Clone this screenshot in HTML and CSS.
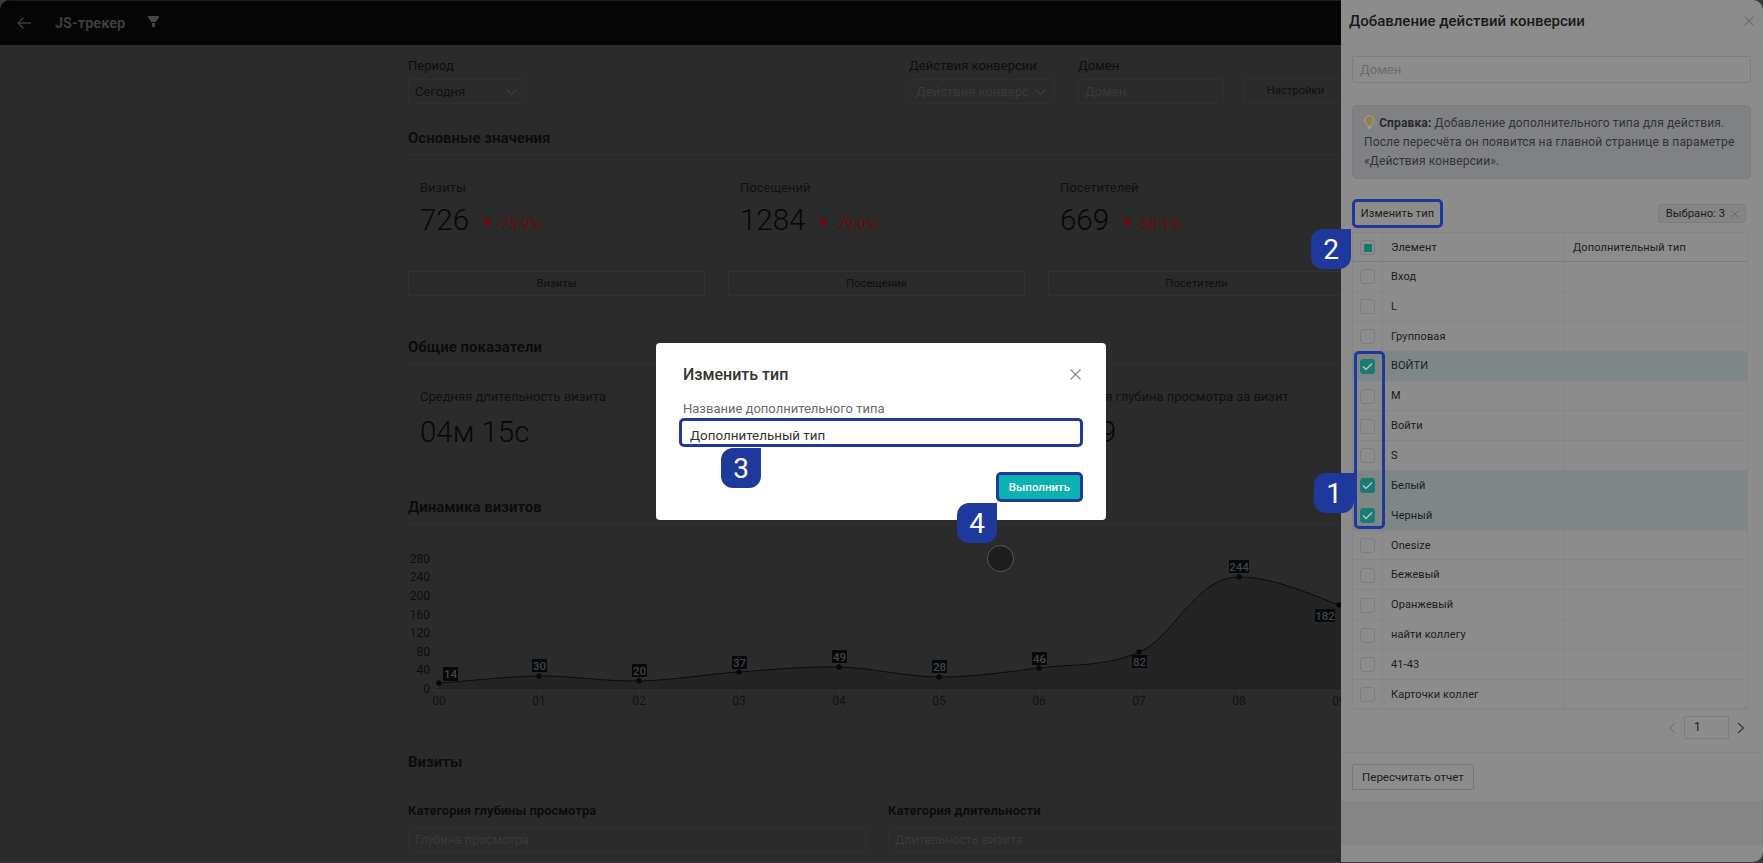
FILE: index.html
```html
<!DOCTYPE html>
<html lang="ru">
<head>
<meta charset="utf-8">
<title>JS-трекер</title>
<link rel="stylesheet" href="styles.css">
</head>
<body>
<div class="app">
  <div class="main">
    <header class="topbar">
      <svg class="back" width="16" height="14" viewBox="0 0 16 14"><path d="M15 7H2M7.500 1.500 2 7l5.500 5.500" fill="none" stroke="#3c3c3c" stroke-width="1.300"/></svg>
      <span class="app-title">JS-трекер</span>
      <svg class="funnel" width="11" height="11" viewBox="0 0 11 11"><path d="M0 0h11v1.500L7.500 6h-4L0 1.500zM4 7h3v4H4z" fill="#454545"/></svg>
    </header>
    <div class="content">
      <div class="filters">
        <div class="field field-period">
          <label class="field-label">Период</label>
          <div class="control"><span class="control-value">Сегодня</span><svg class="chev" width="11" height="8" viewBox="0 0 11 8"><path d="M.5.800 5.500 7 10.500.8" fill="none" stroke="#454545"/></svg></div>
        </div>
        <div class="field field-action">
          <label class="field-label">Действия конверсии</label>
          <div class="control"><span class="control-ph">Действия конверс</span><svg class="chev" width="11" height="8" viewBox="0 0 11 8"><path d="M.5.800 5.500 7 10.500.8" fill="none" stroke="#454545"/></svg></div>
        </div>
        <div class="field field-domain">
          <label class="field-label">Домен</label>
          <div class="control"><span class="control-ph">Домен</span></div>
        </div>
        <button class="ghost-btn settings">Настройки</button>
      </div>

      <h2 class="sec-title first">Основные значения</h2>
      <div class="metrics">
        <div class="metric">
          <div class="metric-label">Визиты</div>
          <div class="metric-value">726<span class="tri"></span><span class="delta">-75.9%</span></div>
        </div>
        <div class="metric">
          <div class="metric-label">Посещений</div>
          <div class="metric-value">1284<span class="tri"></span><span class="delta">-79.0%</span></div>
        </div>
        <div class="metric">
          <div class="metric-label">Посетителей</div>
          <div class="metric-value">669<span class="tri"></span><span class="delta">-68.1%</span></div>
        </div>
      </div>
      <div class="metric-btns">
        <button class="ghost-btn">Визиты</button>
        <button class="ghost-btn">Посещения</button>
        <button class="ghost-btn">Посетители</button>
      </div>

      <h2 class="sec-title second">Общие показатели</h2>
      <div class="metrics metrics-general">
        <div class="metric">
          <div class="metric-label">Средняя длительность визита</div>
          <div class="metric-value">04м 15с</div>
        </div>
        <div class="metric"></div>
        <div class="metric">
          <div class="metric-label">Средняя глубина просмотра за визит</div>
          <div class="metric-value">1.79</div>
        </div>
      </div>

      <h2 class="sec-title third">Динамика визитов</h2>
      <svg class="chart" width="950" height="180" viewBox="408 530 950 180">
        <g class="y-axis">
          <text x="430" y="563">280</text><text x="430" y="581">240</text><text x="430" y="600">200</text><text x="430" y="619">160</text><text x="430" y="637">120</text><text x="430" y="656">80</text><text x="430" y="674">40</text><text x="430" y="693">0</text>
        </g>
        <path class="area" d="M439 683C472 681 506 676.300 539 676C572 675.700 606 681.700 639 681C672 680.300 706 674.300 739 672C772 669.700 806 666.200 839 667C872 667.800 906 676.800 939 677C972 677.200 1006 672.200 1039 668C1072 663.800 1106 667 1139 652C1172 640 1195 577 1239 577C1270 577 1300 590 1339 605L1358 612V690H439Z"/>
        <path class="line" d="M439 683C472 681 506 676.300 539 676C572 675.700 606 681.700 639 681C672 680.300 706 674.300 739 672C772 669.700 806 666.200 839 667C872 667.800 906 676.800 939 677C972 677.200 1006 672.200 1039 668C1072 663.800 1106 667 1139 652C1172 640 1195 577 1239 577C1270 577 1300 590 1339 605L1358 612"/>
        <path class="axis" d="M430 690.500H1358M439.500 690v5M539.500 690v5M639.500 690v5M739.500 690v5M839.500 690v5M939.500 690v5M1039.500 690v5M1139.500 690v5M1239.500 690v5M1339.500 690v5"/>
        <g class="x-axis">
          <text x="439" y="705">00</text><text x="539" y="705">01</text><text x="639" y="705">02</text><text x="739" y="705">03</text><text x="839" y="705">04</text><text x="939" y="705">05</text><text x="1039" y="705">06</text><text x="1139" y="705">07</text><text x="1239" y="705">08</text><text x="1339" y="705">09</text>
        </g>
        <g class="dots">
          <circle cx="439" cy="683" r="2.700"/><circle cx="539" cy="676" r="2.700"/><circle cx="639" cy="681" r="2.700"/><circle cx="739" cy="672" r="2.700"/><circle cx="839" cy="667" r="2.700"/><circle cx="939" cy="677" r="2.700"/><circle cx="1039" cy="668" r="2.700"/><circle cx="1139" cy="652" r="2.700"/><circle cx="1239" cy="577" r="2.700"/><circle cx="1339" cy="605" r="2.700"/>
        </g>
        <g class="tags">
          <rect x="443" y="667" width="15" height="14"/><rect x="532" y="659" width="15" height="13"/><rect x="632" y="664" width="15" height="13"/><rect x="732" y="656" width="15" height="13"/><rect x="832" y="650" width="15" height="13"/><rect x="932" y="660" width="15" height="13"/><rect x="1032" y="652" width="15" height="13"/><rect x="1132" y="655" width="15" height="13"/><rect x="1229" y="560" width="20" height="13"/><rect x="1315" y="609" width="20" height="13"/>
        </g>
        <g class="tag-text">
          <text x="450.500" y="678">14</text><text x="539.500" y="669.500">30</text><text x="639.500" y="674.500">20</text><text x="739.500" y="666.500">37</text><text x="839.500" y="660.500">49</text><text x="939.500" y="670.500">28</text><text x="1039.500" y="662.500">46</text><text x="1139.500" y="665.500">82</text><text x="1239" y="570.500">244</text><text x="1325" y="619.500">182</text>
        </g>
      </svg>

      <h2 class="sec-title fourth">Визиты</h2>
      <div class="cats">
        <div class="cat">
          <div class="cat-label">Категория глубины просмотра</div>
          <div class="control"><span class="control-ph cat-ph">Глубина просмотра</span></div>
        </div>
        <div class="cat">
          <div class="cat-label">Категория длительности</div>
          <div class="control"><span class="control-ph cat-ph">Длительность визита</span></div>
        </div>
      </div>
    </div>
  </div>

  <aside class="drawer">
    <div class="drawer-head">
      <span class="drawer-title">Добавление действий конверсии</span>
      <svg width="10" height="10" viewBox="0 0 10 10"><path d="M1 1l8 8M9 1 1 9" stroke="#6c6c6c" stroke-width="1.100"/></svg>
    </div>
    <div class="drawer-input">Домен</div>
    <div class="help">
      <svg class="bulb" width="11" height="15" viewBox="0 0 11 15"><path d="M5.500.7a4.800 4.800 0 0 0-2.700 8.700c.6.500.8 1.100.8 1.800h3.800c0-.7.200-1.300.8-1.800a4.800 4.800 0 0 0-2.700-8.700z" fill="#8c8450" stroke="#a9a58a" stroke-width=".9"/><path d="M3.800 12.300h3.400M4.400 13.800h2.200" stroke="#a8a8a8" stroke-width="1"/></svg>
      <b>Справка:</b> Добавление дополнительного типа для действия.<br>После пересчёта он появится на главной странице в параметре<br>«Действия конверсии».
    </div>
    <div class="toolbar">
      <button class="mark-btn">Изменить тип</button>
      <span class="chip">Выбрано: 3<svg width="8" height="8" viewBox="0 0 8 8"><path d="M.5.500l7 7M7.500.5l-7 7" stroke="#6a6a6a"/></svg></span>
    </div>
    <div class="table">
      <div class="row head"><div class="cell"><span class="box partial"></span></div><div class="cell">Элемент</div><div class="cell">Дополнительный тип</div></div>
      <div class="row"><div class="cell"><span class="box"></span></div><div class="cell">Вход</div><div class="cell"></div></div>
      <div class="row"><div class="cell"><span class="box"></span></div><div class="cell">L</div><div class="cell"></div></div>
      <div class="row"><div class="cell"><span class="box"></span></div><div class="cell">Групповая</div><div class="cell"></div></div>
      <div class="row on"><div class="cell"><span class="box checked"><svg width="11" height="9" viewBox="0 0 11 9"><path d="M1 4.500 4 7.500 10 1.500" fill="none" stroke="#c0c0c0" stroke-width="1.400"/></svg></span></div><div class="cell">ВОЙТИ</div><div class="cell"></div></div>
      <div class="row"><div class="cell"><span class="box"></span></div><div class="cell">M</div><div class="cell"></div></div>
      <div class="row"><div class="cell"><span class="box"></span></div><div class="cell">Войти</div><div class="cell"></div></div>
      <div class="row"><div class="cell"><span class="box"></span></div><div class="cell">S</div><div class="cell"></div></div>
      <div class="row on"><div class="cell"><span class="box checked"><svg width="11" height="9" viewBox="0 0 11 9"><path d="M1 4.500 4 7.500 10 1.500" fill="none" stroke="#c0c0c0" stroke-width="1.400"/></svg></span></div><div class="cell">Белый</div><div class="cell"></div></div>
      <div class="row on"><div class="cell"><span class="box checked"><svg width="11" height="9" viewBox="0 0 11 9"><path d="M1 4.500 4 7.500 10 1.500" fill="none" stroke="#c0c0c0" stroke-width="1.400"/></svg></span></div><div class="cell">Черный</div><div class="cell"></div></div>
      <div class="row"><div class="cell"><span class="box"></span></div><div class="cell">Onesize</div><div class="cell"></div></div>
      <div class="row"><div class="cell"><span class="box"></span></div><div class="cell">Бежевый</div><div class="cell"></div></div>
      <div class="row"><div class="cell"><span class="box"></span></div><div class="cell">Оранжевый</div><div class="cell"></div></div>
      <div class="row"><div class="cell"><span class="box"></span></div><div class="cell">найти коллегу</div><div class="cell"></div></div>
      <div class="row"><div class="cell"><span class="box"></span></div><div class="cell">41-43</div><div class="cell"></div></div>
      <div class="row"><div class="cell"><span class="box"></span></div><div class="cell">Карточки коллег</div><div class="cell"></div></div>
      <div class="group-mark"></div>
    </div>
    <div class="pager">
      <svg width="8" height="12" viewBox="0 0 8 12"><path d="M7 1 1.500 6 7 11" fill="none" stroke="#757575" stroke-width="1.100"/></svg>
      <span class="page-input">1</span>
      <svg width="8" height="12" viewBox="0 0 8 12"><path d="M1 1 6.500 6 1 11" fill="none" stroke="#333" stroke-width="1.100"/></svg>
    </div>
    <div class="drawer-foot"><button class="recalc">Пересчитать отчет</button></div>
    <div class="band"></div>
  </aside>

  <div class="cursor-dot"></div>

  <div class="modal">
    <div class="modal-head">
      <span class="modal-title">Изменить тип</span>
      <svg width="11" height="11" viewBox="0 0 11 11"><path d="M.5.500l10 10M10.500.5l-10 10" stroke="#8a8a8a" stroke-width="1.100"/></svg>
    </div>
    <div class="modal-label">Название дополнительного типа</div>
    <div class="modal-input">Дополнительный тип</div>
    <div class="modal-foot"><button class="run-btn">Выполнить</button></div>
  </div>

  <span class="badge badge-1">1</span>
  <span class="badge badge-2">2</span>
  <span class="badge badge-3">3</span>
  <span class="badge badge-4">4</span>
</div>
</body>
</html>
```

FILE: styles.css
```css
* { box-sizing: border-box; }
html, body { margin: 0; height: 100%; overflow: hidden; }
body {
  background: #3a3a3a;
  font-family: Roboto, "Noto Sans", sans-serif;
  font-size: 13px;
}
button { font-family: inherit; margin: 0; }

.app {
  position: relative;
  display: flex;
  height: 862px;
  overflow: hidden;
  border-radius: 10px 10px 10px 0;
  background: #2b2b2b;
}

/* page beneath the dim */
.main { flex: 1; min-width: 0; overflow: hidden; }
.topbar {
  display: flex;
  align-items: center;
  height: 45px;
  padding-left: 16px;
  background: #050505;
  border-top: 1px solid #1c1c1c;
}
.back { flex: none; }
.app-title { margin-left: 23px; font-size: 14.500px; font-weight: 700; color: #3d3d3d; }
.funnel { margin: -3px 0 0 23px; }

.content { width: 960px; margin-left: 408px; color: #101010; }

.filters { display: flex; align-items: flex-start; margin-top: 13px; }
.field-label { display: block; height: 16px; margin-bottom: 5px; font-size: 13px; line-height: 16px; color: #0e0e0e; }
.field-period { width: 118px; margin-right: 383px; }
.field-action { width: 146px; margin-right: 23px; }
.field-domain { width: 146px; margin-right: 20px; }
.control {
  display: flex;
  align-items: center;
  justify-content: space-between;
  height: 25px;
  padding: 0 8px 0 6px;
  border: 1px solid #303030;
  border-radius: 2px;
  font-size: 13px;
}
.control-value { color: #101010; }
.control-ph { color: #3a3a3a; white-space: nowrap; overflow: hidden; }
.cat-ph { font-size: 12.500px; }
.chev { flex: none; }
.ghost-btn {
  height: 25px;
  padding: 0;
  background: transparent;
  border: 1px solid #323232;
  border-radius: 2px;
  font-size: 11.300px;
  color: #101010;
}
.settings { width: 103px; margin-top: 20px; }

.sec-title {
  margin: 0;
  height: 27px;
  padding-bottom: 6px;
  border-bottom: 1px solid #303030;
  font-size: 15px;
  line-height: 20px;
  font-weight: 700;
  color: #0c0c0c;
}
.first { margin-top: 24px; }
.second { margin-top: 41px; }
.third { margin-top: 47px; }
.fourth { margin-top: 42px; border-bottom-color: transparent; }

.metrics { display: grid; grid-template-columns: repeat(3, 297px); column-gap: 23px; padding-top: 25px; }
.metric { padding-left: 12px; }
.metric-label { height: 16px; font-size: 13px; line-height: 16px; color: #111; white-space: nowrap; }
.metric-value {
  display: flex;
  align-items: center;
  height: 36px;
  margin-top: 6px;
  font-size: 29.500px;
  font-weight: 300;
  line-height: 36px;
  color: #06080c;
  white-space: nowrap;
}
.metrics-general .metric-value { margin-top: 9px; }
.tri {
  width: 0;
  height: 0;
  margin: 7px 6px 0 14px;
  border-left: 4.700px solid transparent;
  border-right: 4.700px solid transparent;
  border-top: 9px solid #780606;
}
.delta { margin-top: 9px; font-size: 14.500px; font-weight: 400; color: #6e0a0a; }

.metric-btns { display: grid; grid-template-columns: repeat(3, 297px); column-gap: 23px; margin-top: 33px; }

.chart { display: block; margin: 6px 0 0 0; }
.y-axis text { font-size: 12px; fill: #0e0e0e; text-anchor: end; }
.x-axis text { font-size: 12px; fill: #141414; text-anchor: middle; }
.area { fill: #242424; }
.line { fill: none; stroke: #0c0c0c; stroke-width: 1; }
.axis { fill: none; stroke: #333; stroke-width: 1; }
.dots circle { fill: #090909; }
.tags rect { fill: #07090c; }
.tag-text text { font-size: 11.500px; font-weight: 500; fill: #404448; text-anchor: middle; }

.cats { display: grid; grid-template-columns: repeat(2, 458px); column-gap: 22px; padding-top: 24px; }
.cat-label { height: 16px; margin-bottom: 8px; font-size: 13px; font-weight: 700; line-height: 16px; color: #0c0c0c; white-space: nowrap; }

/* drawer */
.drawer {
  flex: none;
  display: flex;
  flex-direction: column;
  width: 422px;
  background: #8c8c8c;
  color: #181818;
}
.drawer-head {
  display: flex;
  align-items: center;
  justify-content: space-between;
  flex: none;
  height: 45px;
  padding: 0 9px 2px 8px;
  border-bottom: 1px solid #858585;
}
.drawer-title { font-size: 15px; font-weight: 500; color: #1a1a1a; }
.drawer-input {
  height: 27px;
  margin: 11px 12px 0 11px;
  padding-left: 7px;
  border: 1px solid #7e7e7e;
  border-radius: 2px;
  font-size: 13px;
  line-height: 25px;
  color: #6b6b6b;
  flex: none;
}
.help {
  flex: none;
  height: 74px;
  margin: 22px 12px 0 11px;
  padding: 8px 0 0 11px;
  background: #7f8185;
  border: 1px solid #7a7c80;
  border-radius: 5px;
  font-size: 12px;
  letter-spacing: .14px;
  line-height: 19px;
  color: #333;
  white-space: nowrap;
}
.help b { font-weight: 700; color: #2a2a2a; }
.bulb { vertical-align: -3px; margin-right: 1px; }
.toolbar {
  flex: none;
  display: flex;
  align-items: center;
  justify-content: space-between;
  height: 29px;
  margin: 20px 17px 0 11px;
}
.mark-btn {
  width: 91px;
  height: 29px;
  padding: 0;
  background: transparent;
  border: 3px solid #1f389b;
  border-radius: 5px;
  font-size: 11px;
  letter-spacing: .1px;
  color: #1c1c1c;
}
.chip {
  display: flex;
  align-items: center;
  gap: 6px;
  height: 19px;
  padding: 0 6px 0 7px;
  background: #858585;
  border: 1px solid #7c7c7c;
  border-radius: 3px;
  font-size: 11.300px;
  color: #1c1c1c;
}
.table {
  position: relative;
  flex: none;
  width: 396px;
  height: 477px;
  margin: 4px 0 0 11px;
  border: 1px solid #858585;
}
.row {
  display: grid;
  grid-template-columns: 30px 182px 1fr;
  height: 29.850px;
  border-bottom: 1px solid #858585;
  font-size: 11px;
  letter-spacing: .1px;
}
.row:last-of-type { border-bottom: 0; }
.row.head { height: 29px; border-bottom-color: #7b7b7b; color: #2a2a2a; }
.row.on { background: #7e8688; }
.cell {
  display: flex;
  align-items: center;
  padding-left: 8px;
  border-right: 1px solid #858585;
  color: #1c1c1c;
}
.cell:last-child { border-right: 0; }
.box {
  display: flex;
  align-items: center;
  justify-content: center;
  flex: none;
  width: 15px;
  height: 15px;
  border: 1px solid #7c7c7c;
  border-radius: 3px;
  margin-top: 1px;
}
.cell:first-child { padding-left: 7px; }
.checked { background: #1a7a74; border-color: #1a7a74; }
.partial::before { content: ""; width: 8px; height: 8px; background: #107a72; }
.group-mark {
  position: absolute;
  left: 1px;
  top: 118px;
  width: 31px;
  height: 178px;
  border: 3px solid #1f389b;
  border-radius: 5px;
}
.pager {
  flex: none;
  display: flex;
  align-items: center;
  justify-content: flex-end;
  gap: 8px;
  height: 23px;
  margin: 7px 18px 0 0;
}
.page-input {
  width: 45px;
  height: 23px;
  padding-left: 9px;
  border: 1px solid #7c7c7c;
  border-radius: 2px;
  font-size: 12px;
  line-height: 20px;
  color: #1c1c1c;
}
.drawer-foot { flex: none; margin-top: 13px; padding: 11px 0 0 11px; border-top: 1px solid #858585; }
.recalc {
  display: block;
  width: 122px;
  height: 26px;
  padding: 0;
  background: transparent;
  border: 1px solid #767676;
  border-radius: 2px;
  font-size: 11.500px;
  color: #1c1c1c;
}
.band { flex: none; height: 44px; margin-top: 11px; background: #858585; }

/* modal and callouts over the page */
.modal {
  position: absolute;
  left: 656px;
  top: 343px;
  width: 450px;
  height: 177px;
  padding: 0 23px;
  background: #fff;
  border-radius: 4px;
}
.modal-head { display: flex; align-items: center; justify-content: space-between; height: 62px; padding: 0 2px 0 4px; }
.modal-title { font-size: 16px; font-weight: 500; color: #333; }
.modal-label { height: 16px; margin-top: -4px; padding-left: 4px; font-size: 13px; line-height: 16px; color: #6a6a6a; }
.modal-input {
  height: 29px;
  margin-top: 1px;
  padding: 6px 0 0 8px;
  border: 3px solid #1f389b;
  border-radius: 5px;
  font-size: 13.400px;
  line-height: 17px;
  color: #333;
}
.modal-foot { display: flex; justify-content: flex-end; margin-top: 25px; }
.run-btn {
  width: 87px;
  height: 30px;
  padding: 0;
  background: #0ab3b0;
  border: 3px solid #1f389b;
  border-radius: 5px;
  font-size: 11.500px;
  font-weight: 500;
  color: #fff;
}
.badge {
  position: absolute;
  display: flex;
  align-items: center;
  justify-content: center;
  width: 40px;
  height: 40px;
  background: #1f389b;
  border-radius: 12px 0 12px 12px;
  font-size: 28px;
  color: #fff;
}
.badge-1 { left: 1314px; top: 473px; }
.badge-2 { left: 1311px; top: 229px; }
.badge-3 { left: 721px; top: 448px; }
.badge-4 { left: 957px; top: 503px; }
.cursor-dot {
  position: absolute;
  left: 987px;
  top: 545px;
  width: 27px;
  height: 27px;
  background: #1d1d1d;
  border: 1px solid #575757;
  border-radius: 50%;
}
```
